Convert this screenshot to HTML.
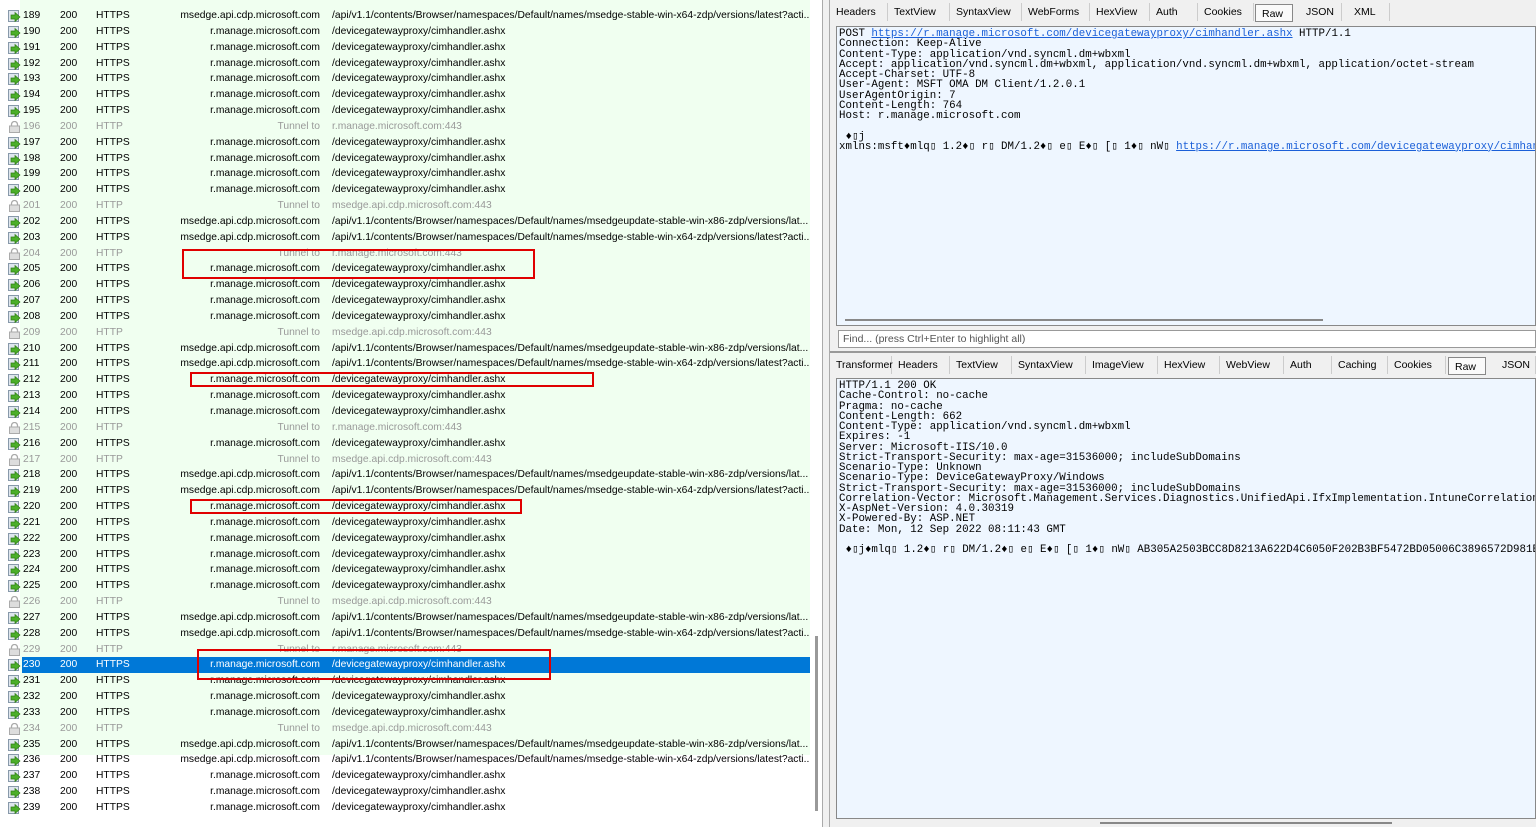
<!DOCTYPE html>
<html><head><meta charset="utf-8">
<style>
*{margin:0;padding:0;box-sizing:border-box}
body{width:1536px;height:827px;overflow:hidden;background:#f0f0f0;font-family:"Liberation Sans",sans-serif;position:relative}
#left{position:absolute;left:0;top:0;width:822px;height:827px;background:#fff}
.gbg{position:absolute;left:20px;top:0;width:790px;height:755px;background:#f0fff0}
.r{position:absolute;left:0;height:16px;width:810px;overflow:hidden;font-size:10.3px;line-height:16px;color:#000;white-space:nowrap}
.r span{position:absolute;top:0}
.n{left:23px}.s{left:60px}.p{left:96px}.h{right:490px;text-align:right}.u{left:332px}
.t{color:#999}
.sel{background:#0078d7;color:#fff;left:22px;width:788px}
.sel .n{left:1px}.sel .s{left:38px}.sel .p{left:74px}.sel .h{right:490px}.sel .u{left:310px}
.red{position:absolute;border:2px solid #e00000}
#sb{position:absolute;left:815px;top:636px;width:3px;height:175px;background:#999}
#split{position:absolute;left:822px;top:0;width:8px;height:827px;background:#f0f0f0;border-left:1px solid #aaa;border-right:1px solid #aaa}
.tabs{position:absolute;left:830px;height:20px;width:706px;font-size:10.5px;line-height:18px}
.tabs span{position:absolute;top:0;padding-left:6px;border-right:1px solid #ccc;height:18px}
.tabs .raw{border:1px solid #888;background:#fafafa;top:1px}
.box{position:absolute;background:#eef6ff;border:1px solid #888;font-family:"Liberation Mono",monospace;font-size:10.8px;line-height:10.25px;white-space:pre;overflow:hidden;color:#000;padding:2px 0 0 2px}
a{color:#1a5fd8;text-decoration:underline}
.hs{position:absolute;height:2px;background:#888}
</style></head><body>
<div id="left"><div class="gbg"></div>
<svg width="0" height="0" style="position:absolute"><defs>
<symbol id="ar" viewBox="0 0 13 12"><rect x="0.5" y="0.5" width="10" height="11" fill="#dfe6ee" stroke="#8899aa"/><path d="M3 5h4V2.5L12 7l-5 4.5V9H3z" fill="#4caf2a" stroke="#2e7d12" stroke-width=".7"/></symbol>
<symbol id="lk" viewBox="0 0 13 12"><path d="M3.5 5V3.5a3 3 0 016 0V5" fill="none" stroke="#aaa" stroke-width="1.3"/><rect x="1.5" y="5" width="10" height="6.5" fill="#ddd" stroke="#aaa"/></symbol>
</defs></svg>
<div id="rows"></div>
</div>
<div id="sb"></div>
<div class="red" style="left:182px;top:249px;width:353px;height:30px"></div>
<div class="red" style="left:190px;top:372px;width:404px;height:15px"></div>
<div class="red" style="left:190px;top:499px;width:332px;height:15px"></div>
<div class="red" style="left:197px;top:649px;width:354px;height:31px"></div>
<div id="split"></div>

<div class="tabs" style="top:3px">
<span style="left:0;width:58px">Headers</span><span style="left:58px;width:62px">TextView</span><span style="left:120px;width:72px">SyntaxView</span><span style="left:192px;width:68px">WebForms</span><span style="left:260px;width:60px">HexView</span><span style="left:320px;width:48px">Auth</span><span style="left:368px;width:56px">Cookies</span><span class="raw" style="left:425px;width:38px">Raw</span><span style="left:470px;width:42px">JSON</span><span style="left:518px;width:42px">XML</span>
</div>
<div class="box" style="left:836px;top:26px;width:700px;height:300px">POST <a>https://r.manage.microsoft.com/devicegatewayproxy/cimhandler.ashx</a> HTTP/1.1
Connection: Keep-Alive
Content-Type: application/vnd.syncml.dm+wbxml
Accept: application/vnd.syncml.dm+wbxml, application/vnd.syncml.dm+wbxml, application/octet-stream
Accept-Charset: UTF-8
User-Agent: MSFT OMA DM Client/1.2.0.1
UserAgentOrigin: 7
Content-Length: 764
Host: r.manage.microsoft.com

 ♦▯j
xmlns:msft♦mlq▯ 1.2♦▯ r▯ DM/1.2♦▯ e▯ E♦▯ [▯ 1♦▯ nW▯ <a>https://r.manage.microsoft.com/devicegatewayproxy/cimhandler.ashx</a></div>
<div class="hs" style="left:845px;top:319px;width:478px"></div>
<div style="position:absolute;left:838px;top:330px;width:698px;height:18px;background:#fff;border:1px solid #999;font-size:10.5px;line-height:16px;color:#555;padding-left:4px">Find... (press Ctrl+Enter to highlight all)</div>
<div style="position:absolute;left:830px;top:351px;width:706px;height:2px;background:#999"></div>

<div class="tabs" style="top:356px">
<span style="left:0;width:62px">Transformer</span><span style="left:62px;width:58px">Headers</span><span style="left:120px;width:62px">TextView</span><span style="left:182px;width:74px">SyntaxView</span><span style="left:256px;width:72px">ImageView</span><span style="left:328px;width:62px">HexView</span><span style="left:390px;width:64px">WebView</span><span style="left:454px;width:48px">Auth</span><span style="left:502px;width:56px">Caching</span><span style="left:558px;width:58px">Cookies</span><span class="raw" style="left:618px;width:38px">Raw</span><span style="left:666px;width:40px">JSON</span>
</div>
<div class="box" style="left:836px;top:378px;width:700px;height:441px">HTTP/1.1 200 OK
Cache-Control: no-cache
Pragma: no-cache
Content-Length: 662
Content-Type: application/vnd.syncml.dm+wbxml
Expires: -1
Server: Microsoft-IIS/10.0
Strict-Transport-Security: max-age=31536000; includeSubDomains
Scenario-Type: Unknown
Scenario-Type: DeviceGatewayProxy/Windows
Strict-Transport-Security: max-age=31536000; includeSubDomains
Correlation-Vector: Microsoft.Management.Services.Diagnostics.UnifiedApi.IfxImplementation.IntuneCorrelationVector
X-AspNet-Version: 4.0.30319
X-Powered-By: ASP.NET
Date: Mon, 12 Sep 2022 08:11:43 GMT

 ♦▯j♦mlq▯ 1.2♦▯ r▯ DM/1.2♦▯ e▯ E♦▯ [▯ 1♦▯ nW▯ AB305A2503BCC8D8213A622D4C6050F202B3BF5472BD05006C3896572D981EC8♦▯▯ gW▯</div>
<div class="hs" style="left:1100px;top:822px;width:292px"></div>

<script>
(function(){
var R='r.manage.microsoft.com',M='msedge.api.cdp.microsoft.com',RU='/devicegatewayproxy/cimhandler.ashx',
X64='/api/v1.1/contents/Browser/namespaces/Default/names/msedge-stable-win-x64-zdp/versions/latest?acti...',
X86='/api/v1.1/contents/Browser/namespaces/Default/names/msedgeupdate-stable-win-x86-zdp/versions/lat...';
var spec={189:'6',196:'tr',201:'tm',202:'8',203:'6',204:'tr',209:'tm',210:'8',211:'6',215:'tr',217:'tm',218:'8',219:'6',226:'tm',227:'8',228:'6',229:'tr',234:'tm',235:'8',236:'6'};
var h='';
for(var i=189;i<=239;i++){
 var k=spec[i]||'r',ty=(8+(i-189)*15.84).toFixed(2),cls='r',host=R,url=RU,proto='HTTPS',icon='ar';
 if(k=='6'){host=M;url=X64}else if(k=='8'){host=M;url=X86}
 else if(k=='tr'||k=='tm'){cls+=' t';proto='HTTP';icon='lk';host='Tunnel to';url=(k=='tr'?R:M)+':443'}
 var icn='<svg style="position:absolute;left:8px;top:2px" width="13" height="12"><use href="#'+icon+'"/></svg>';
 if(i==230){
  h+='<div class="r" style="top:'+ty+'px;width:22px">'+icn+'</div>';
  h+='<div class="r sel" style="top:'+ty+'px;width:788px"><span class="n">'+i+'</span><span class="s">200</span><span class="p">'+proto+'</span><span class="h">'+host+'</span><span class="u">'+url+'</span></div>';
 } else
 h+='<div class="'+cls+'" style="top:'+ty+'px">'+icn+'<span class="n">'+i+'</span><span class="s">200</span><span class="p">'+proto+'</span><span class="h">'+host+'</span><span class="u">'+url+'</span></div>';
}
document.getElementById('rows').innerHTML=h;
})();
</script>
</body></html>
